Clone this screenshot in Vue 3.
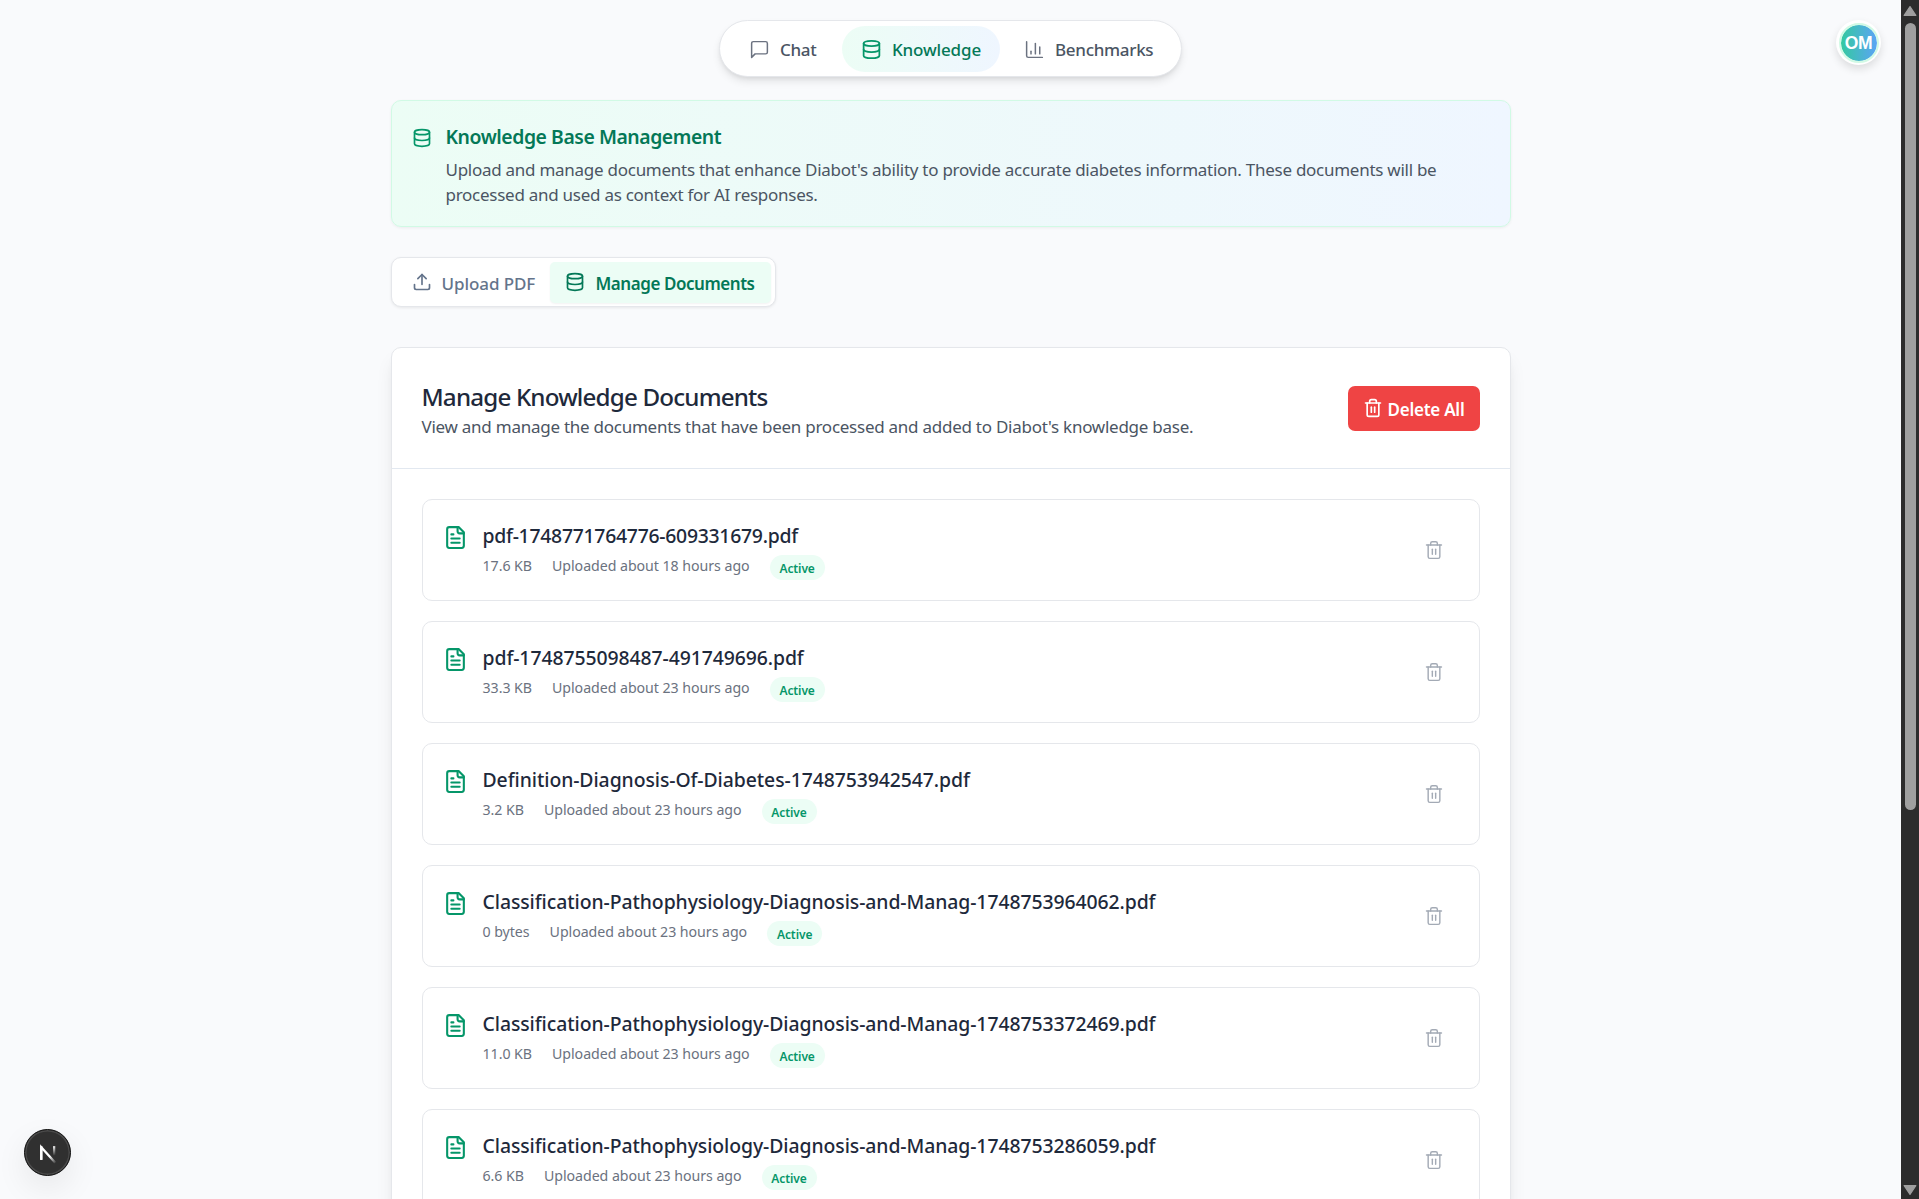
<script setup>
const tabs = [
  { id: 'chat', label: 'Chat' },
  { id: 'knowledge', label: 'Knowledge', active: true },
  { id: 'benchmarks', label: 'Benchmarks' },
]

const documents = [
  { name: 'pdf-1748771764776-609331679.pdf', size: '17.6 KB', age: 'about 18 hours ago', tight: true },
  { name: 'pdf-1748755098487-491749696.pdf', size: '33.3 KB', age: 'about 23 hours ago' },
  { name: 'Definition-Diagnosis-Of-Diabetes-1748753942547.pdf', size: '3.2 KB', age: 'about 23 hours ago' },
  { name: 'Classification-Pathophysiology-Diagnosis-and-Manag-1748753964062.pdf', size: '0 bytes', age: 'about 23 hours ago' },
  { name: 'Classification-Pathophysiology-Diagnosis-and-Manag-1748753372469.pdf', size: '11.0 KB', age: 'about 23 hours ago' },
  { name: 'Classification-Pathophysiology-Diagnosis-and-Manag-1748753286059.pdf', size: '6.6 KB', age: 'about 23 hours ago' },
]
</script>

<template>
  <div class="page">
    <svg class="sprite" aria-hidden="true">
      <symbol id="chat" viewBox="0 0 24 24">
        <path d="M21 15a2 2 0 0 1-2 2H7l-4 4V5a2 2 0 0 1 2-2h14a2 2 0 0 1 2 2z" />
      </symbol>
      <symbol id="knowledge" viewBox="0 0 24 24">
        <ellipse cx="12" cy="5" rx="9" ry="3" />
        <path d="M3 5v14a9 3 0 0 0 18 0V5" />
        <path d="M3 12a9 3 0 0 0 18 0" />
      </symbol>
      <symbol id="benchmarks" viewBox="0 0 24 24">
        <path d="M3 3v16a2 2 0 0 0 2 2h16" />
        <path d="M18 17V9" />
        <path d="M13 17V5" />
        <path d="M8 17v-3" />
      </symbol>
      <symbol id="upload" viewBox="0 0 24 24">
        <path d="M21 15v4a2 2 0 0 1-2 2H5a2 2 0 0 1-2-2v-4" />
        <path d="M17 8l-5-5-5 5" />
        <path d="M12 3v12" />
      </symbol>
      <symbol id="trash" viewBox="0 0 24 24">
        <path d="M3 6h18" />
        <path d="M19 6v14c0 1-1 2-2 2H7c-1 0-2-1-2-2V6" />
        <path d="M8 6V4c0-1 1-2 2-2h4c1 0 2 1 2 2v2" />
        <path d="M10 11v6" />
        <path d="M14 11v6" />
      </symbol>
      <symbol id="file" viewBox="0 0 24 24">
        <path d="M15 2H6a2 2 0 0 0-2 2v16a2 2 0 0 0 2 2h12a2 2 0 0 0 2-2V7z" />
        <path d="M14 2v4a2 2 0 0 0 2 2h4" />
        <path d="M10 9H8" />
        <path d="M16 13H8" />
        <path d="M16 17H8" />
      </symbol>
    </svg>

    <div class="content">
      <nav class="nav">
        <a v-for="tab in tabs" :key="tab.id" class="nav-item" :class="[tab.id, { active: tab.active }]">
          <svg class="icon"><use :href="'#' + tab.id" /></svg>
          <span>{{ tab.label }}</span>
        </a>
      </nav>

      <main class="main">
        <section class="banner">
          <svg class="icon banner-icon"><use href="#knowledge" /></svg>
          <div>
            <h2>Knowledge Base Management</h2>
            <p>Upload and manage documents that enhance Diabot's ability to provide accurate diabetes information. These documents will be<br />processed and used as context for AI responses.</p>
          </div>
        </section>

        <div class="tabs">
          <button class="tab upload">
            <svg class="icon"><use href="#upload" /></svg>
            <span>Upload PDF</span>
          </button>
          <button class="tab manage">
            <svg class="icon"><use href="#knowledge" /></svg>
            <span>Manage Documents</span>
          </button>
        </div>

        <section class="card">
          <header class="card-header">
            <div class="card-heading">
              <h1>Manage Knowledge Documents</h1>
              <p>View and manage the documents that have been processed and added to Diabot's knowledge base.</p>
            </div>
            <button class="delete-all">
              <svg class="icon"><use href="#trash" /></svg>
              <span>Delete All</span>
            </button>
          </header>
          <ul class="list">
            <li v-for="doc in documents" :key="doc.name" class="doc">
              <svg class="icon doc-icon"><use href="#file" /></svg>
              <div class="doc-body">
                <h3 :class="{ tight: doc.tight }">{{ doc.name }}</h3>
                <div class="meta">
                  <span>{{ doc.size }}</span>
                  <span>Uploaded {{ doc.age }}</span>
                  <span class="badge">Active</span>
                </div>
              </div>
              <button class="remove"><svg class="icon"><use href="#trash" /></svg></button>
            </li>
          </ul>
        </section>
      </main>
    </div>

    <div class="scrollbar">
      <svg class="arrow" viewBox="0 0 12 10"><path d="M6 1.2 11 8.8H1z" /></svg>
      <div class="thumb"></div>
      <svg class="arrow down" viewBox="0 0 12 10"><path d="M6 1.2 11 8.8H1z" /></svg>
    </div>

    <div class="avatar"><div class="avatar-face">OM</div></div>

    <div class="dev-badge">
      <svg viewBox="0 0 40 40">
        <defs>
          <linearGradient id="slant" gradientUnits="userSpaceOnUse" x1="22" y1="23" x2="27.5" y2="29">
            <stop stop-color="#fff" />
            <stop offset="1" stop-color="#fff" stop-opacity="0" />
          </linearGradient>
          <linearGradient id="stem" gradientUnits="userSpaceOnUse" x1="25" y1="13.5" x2="25" y2="22.5">
            <stop stop-color="#fff" />
            <stop offset="1" stop-color="#fff" stop-opacity="0" />
          </linearGradient>
        </defs>
        <path d="M14.3 26.2V15.2L26.6 28.8" fill="none" stroke="url(#slant)" stroke-width="2" />
        <path d="M14.3 26.3V14.2" fill="none" stroke="#fff" stroke-width="2" />
        <path d="M25.6 14.2V23" fill="none" stroke="url(#stem)" stroke-width="2" />
      </svg>
    </div>
  </div>
</template>

<style>
body {
  margin: 0;
  overflow: hidden;
}
</style>

<style scoped>
* {
  box-sizing: border-box;
}

.page {
  position: relative;
  display: flex;
  height: 1199px;
  overflow: hidden;
  background: #f9fafc;
  font-family: "Noto Sans", "Open Sans", sans-serif;
  color: #1e293b;
}

.sprite {
  position: absolute;
  width: 0;
  height: 0;
}

h1, h2, h3, p, ul {
  margin: 0;
  padding: 0;
}

h1, h3 {
  font-weight: 500;
}

button {
  border: 0;
  padding: 0;
  background: none;
  font: inherit;
}

span, h1, h2, h3, p {
  white-space: nowrap;
}

.icon {
  flex: none;
  width: 20px;
  height: 20px;
  fill: none;
  stroke: currentColor;
  stroke-width: 2;
  stroke-linecap: round;
  stroke-linejoin: round;
}

.content {
  flex: 1;
  display: flex;
  flex-direction: column;
  align-items: center;
  padding-top: 20px;
}

.nav {
  flex: none;
  display: flex;
  gap: 5px;
  width: 463px;
  height: 57px;
  padding: 5px 9px 5px 10px;
  border: 1px solid #e5e7eb;
  border-radius: 29px;
  background: #fff;
  box-shadow: 0 5px 8px -1px rgba(0, 0, 0, 0.1), 0 2px 5px -2px rgba(0, 0, 0, 0.1);
}

.nav-item {
  display: flex;
  align-items: center;
  gap: 10px;
  height: 46px;
  padding-left: 19px;
  border-radius: 23px;
  font-size: 17px;
  font-weight: 500;
  letter-spacing: -0.3px;
  color: #4b5563;
}

.nav-item .icon {
  width: 21px;
  height: 21px;
  color: #6b7280;
  stroke-width: 1.7;
}

.nav-item.chat {
  width: 107px;
}

.nav-item.knowledge {
  width: 158px;
  background: linear-gradient(90deg, #ecfdf5, #eff6ff);
  letter-spacing: -0.15px;
  color: #047857;
}

.nav-item.knowledge .icon {
  color: #059669;
  stroke-width: 2;
}

.main {
  width: 1120px;
  margin-top: 23px;
}

.banner {
  display: flex;
  gap: 14px;
  height: 127px;
  padding: 20px 19px 20px 20px;
  border: 1px solid #d1fae5;
  border-radius: 10px;
  background: linear-gradient(90deg, #ecfdf5, #eff6ff);
  box-shadow: 0 1px 3px rgba(0, 0, 0, 0.06);
}

.banner-icon {
  margin-top: 7px;
  color: #059669;
}

.banner h2 {
  font-size: 19.4px;
  font-weight: 600;
  line-height: 32px;
  letter-spacing: -0.45px;
  color: #047857;
}

.banner p {
  margin-top: 4px;
  font-size: 17px;
  line-height: 25px;
  letter-spacing: -0.266px;
  color: #4b5563;
}

.tabs {
  display: flex;
  width: 385px;
  height: 50px;
  margin-top: 30px;
  padding: 4px;
  border: 1px solid #e5e7eb;
  border-radius: 10px;
  background: #fff;
  box-shadow: 0 1px 3px rgba(0, 0, 0, 0.08);
}

.tab {
  display: flex;
  align-items: center;
  gap: 10px;
  height: 41px;
  padding-left: 16px;
  border-radius: 5px;
  font-size: 17px;
  font-weight: 500;
  letter-spacing: -0.08px;
  color: #64748b;
}

.tab .icon {
  margin-top: -1px;
}

.tab span,
.delete-all span {
  padding-top: 2px;
}

.tab.upload {
  width: 154px;
}

.tab.manage {
  width: 221px;
  padding-left: 15px;
  gap: 11px;
  background: #ecfdf5;
  font-weight: 600;
  letter-spacing: -0.45px;
  color: #047857;
  box-shadow: 0 1px 2px rgba(0, 0, 0, 0.05);
}

.card {
  height: 1000px;
  margin-top: 40px;
  border: 1px solid #e5e7eb;
  border-radius: 10px;
  background: #fff;
  box-shadow: 0 12px 19px -4px rgba(0, 0, 0, 0.1), 0 5px 8px -5px rgba(0, 0, 0, 0.1);
}

.card-header {
  display: flex;
  justify-content: space-between;
  align-items: center;
  height: 121px;
  padding: 0 30px;
  border-bottom: 1px solid #e2e8f0;
}

.card-heading {
  padding-top: 4px;
}

.card-header h1 {
  font-size: 24.2px;
  line-height: 32px;
  letter-spacing: -0.83px;
}

.card-header p {
  font-size: 17px;
  line-height: 27px;
  letter-spacing: -0.255px;
  color: #4b5563;
}

.delete-all {
  display: flex;
  align-items: center;
  gap: 5px;
  width: 132px;
  height: 45px;
  padding-left: 15px;
  border-radius: 7px;
  background: #ef4444;
  font-size: 17px;
  font-weight: 600;
  letter-spacing: -0.25px;
  color: #fff;
}

.list {
  display: flex;
  flex-direction: column;
  gap: 20px;
  padding: 30px;
  list-style: none;
}

.doc {
  display: flex;
  align-items: flex-start;
  height: 102px;
  padding: 20px;
  border: 1px solid #e5e7eb;
  border-radius: 10px;
}

.doc-icon {
  width: 25px;
  height: 25px;
  margin-top: 5px;
  color: #059669;
}

.doc-body {
  flex: 1;
  padding-left: 15px;
}

.doc h3 {
  font-size: 19.4px;
  line-height: 32px;
  letter-spacing: -0.08px;
}

.doc h3.tight {
  letter-spacing: -0.27px;
}

.meta {
  display: flex;
  gap: 20px;
  margin-top: 3px;
  font-size: 14.2px;
  line-height: 21px;
  letter-spacing: -0.05px;
  color: #6b7280;
}

.badge {
  width: 55px;
  height: 25px;
  border-radius: 13px;
  background: #ecfdf5;
  font-size: 12px;
  font-weight: 600;
  line-height: 27px;
  text-align: center;
  letter-spacing: -0.1px;
  color: #059669;
}

.remove {
  display: flex;
  justify-content: center;
  align-items: center;
  align-self: center;
  width: 50px;
  height: 45px;
  color: #a3aab5;
}

.remove .icon {
  stroke-width: 1.7;
}

.scrollbar {
  display: flex;
  flex-direction: column;
  align-items: center;
  width: 18px;
  padding: 5px 0 3px;
  background: #2c2c2c;
}

.arrow {
  width: 14px;
  height: 12px;
  fill: #9f9f9f;
  stroke: #9f9f9f;
  stroke-width: 1;
  stroke-linejoin: round;
}

.arrow.down {
  margin-top: auto;
  transform: rotate(180deg);
}

.thumb {
  width: 11px;
  height: 787px;
  margin-top: 6px;
  border-radius: 6px;
  background: #9f9f9f;
}

.avatar {
  position: absolute;
  top: 20px;
  left: 1836px;
  width: 45px;
  height: 45px;
  padding: 2.5px;
  border-radius: 50%;
  background: #fff;
  box-shadow: 0 4px 8px rgba(0, 0, 0, 0.12);
}

.avatar-face {
  display: flex;
  justify-content: center;
  align-items: center;
  width: 40px;
  height: 40px;
  padding-top: 2px;
  border: 2px solid #d1fae5;
  border-radius: 50%;
  background: linear-gradient(90deg, #34c9a0, #5ba4f5);
  background-clip: padding-box;
  font: 700 17.5px "Liberation Sans", sans-serif;
  letter-spacing: -0.3px;
  color: #fff;
}

.dev-badge {
  position: absolute;
  top: 1128.5px;
  left: 23.5px;
  width: 47.5px;
  height: 47.5px;
  border: 1px solid #111;
  border-radius: 50%;
  background: #303030;
  box-shadow: inset 0 0 0 1.5px #4a4a4a, 0 12px 32px rgba(0, 0, 0, 0.08);
}

.dev-badge svg {
  display: block;
  width: 45.5px;
  height: 45.5px;
}
</style>
